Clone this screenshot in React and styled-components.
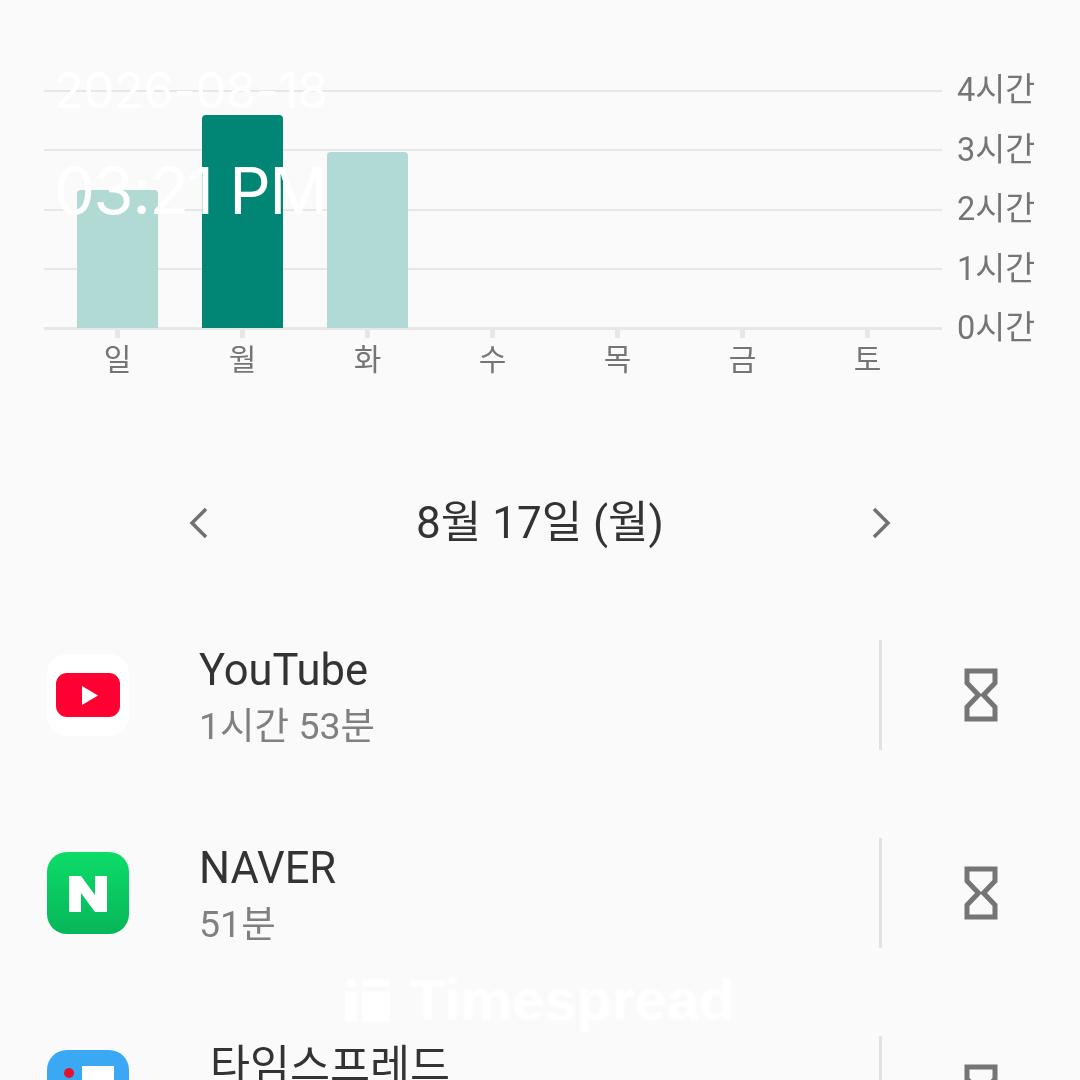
import React from "react";
import styled, { createGlobalStyle } from "styled-components";

const Global = createGlobalStyle`
  html, body { margin: 0; padding: 0; background: #fafafa; }
  body { font-family: Roboto, "Noto Sans CJK KR", "Noto Sans", sans-serif; }
`;

const Page = styled.div`
  position: relative;
  width: 1080px;
  height: 1080px;
  overflow: hidden;
  background: #fafafa;
`;

const ChartSection = styled.section`
  display: flex;
  align-items: flex-start;
  padding: 90px 0 0 44px;
  filter: blur(0.6px);
`;

const ChartMain = styled.div`
  width: 898px;
`;

const Plot = styled.div`
  position: relative;
  height: 240px;
  display: flex;
  flex-direction: column;
  justify-content: space-between;
`;

const GridLine = styled.div`
  height: ${(p) => (p.$base ? 3 : 2)}px;
  background: #e7e7e7;
`;

const BarRow = styled.div`
  position: absolute;
  inset: 0 13px 2px 11px;
  display: grid;
  grid-template-columns: repeat(7, 125px);
  align-items: end;
  justify-items: center;
`;

const Bar = styled.div`
  width: 81px;
  border-radius: 4px 4px 0 0;
  background: ${(p) => (p.$active ? "#018574" : "#b2dad5")};
`;

const DayRow = styled.div`
  display: grid;
  grid-template-columns: repeat(7, 125px);
  padding-left: 11px;
`;

const Day = styled.div`
  display: flex;
  flex-direction: column;
  align-items: center;
  font-size: 30px;
  line-height: 36px;
  color: #757575;
  &::before {
    content: "";
    width: 5px;
    height: 8px;
    margin-bottom: 4px;
    background: #e6e6e6;
  }
`;

const AxisLabels = styled.div`
  height: 240px;
  margin-left: 15px;
  display: flex;
  flex-direction: column;
  justify-content: space-between;
`;

const AxisLabel = styled.div`
  height: 2px;
  display: flex;
  align-items: center;
  font-size: 32.5px;
  line-height: 40px;
  color: #757575;
  white-space: nowrap;
  position: relative;
  top: -1px;
`;

const DateNav = styled.nav`
  display: flex;
  align-items: center;
  justify-content: space-between;
  margin-top: 113px;
  padding: 0 188px;
  height: 64px;
  filter: blur(0.6px);
`;

const DateTitle = styled.h2`
  margin: 0;
  font-size: 44px;
  font-weight: 400;
  line-height: 64px;
  color: #333;
  white-space: nowrap;
`;

const Chevron = styled.svg`
  width: 22px;
  height: 34px;
  fill: none;
  stroke: #707070;
  stroke-width: 3.5;
`;

const AppList = styled.ul`
  list-style: none;
  margin: 85px 0 0;
  padding: 0 82px 0 47px;
  display: flex;
  flex-direction: column;
  gap: 88px;
  filter: blur(0.6px);
`;

const AppRow = styled.li`
  height: 110px;
  display: flex;
  align-items: center;
`;

const AppIcon = styled.svg`
  flex: none;
  width: 82px;
  height: 82px;
  align-self: flex-start;
  margin-top: 14px;
`;

const AppText = styled.div`
  flex: 1;
  margin-left: ${(p) => (p.$indent ? 81 : 70)}px;
  align-self: flex-start;
  margin-top: 6px;
`;

const AppName = styled.div`
  font-size: 43.5px;
  line-height: 50px;
  color: #333;
  white-space: nowrap;
`;

const AppTime = styled.div`
  font-size: 37.5px;
  line-height: 50px;
  margin-top: 5px;
  color: #808080;
  white-space: nowrap;
`;

const Divider = styled.div`
  width: 3px;
  height: 110px;
  background: #e2e2e2;
`;

const TimerIcon = styled.svg`
  width: 34px;
  height: 54px;
  margin-left: 82px;
  fill: none;
  stroke: #757575;
  stroke-width: 5;
`;

const Stamp = styled.div`
  position: absolute;
  left: 54px;
  top: 58px;
  width: 280px;
  color: #fff;
  font-family: Inter, Roboto, sans-serif;
  font-weight: 400;
`;

const StampDate = styled.div`
  font-size: 49px;
  line-height: 66px;
  letter-spacing: -0.4px;
  white-space: nowrap;
`;

const StampTime = styled.div`
  margin-top: 29px;
  font-size: 65px;
  line-height: 76px;
  letter-spacing: -1.5px;
  white-space: nowrap;
`;

const Watermark = styled.div`
  position: absolute;
  left: 345px;
  top: 970px;
  display: flex;
  align-items: center;
  gap: 20px;
  color: #fff;
  font-family: "Liberation Sans", Arial, sans-serif;
  font-weight: 700;
  font-size: 58px;
  line-height: 60px;
  filter: blur(1px);
`;

const WatermarkMark = styled.svg`
  width: 45px;
  height: 44px;
  fill: #fff;
`;

const bars = [138, 213, 176];
const days = ["일", "월", "화", "수", "목", "금", "토"];
const hours = ["4시간", "3시간", "2시간", "1시간", "0시간"];

const Hourglass = () => (
  <TimerIcon viewBox="0 0 34 54">
    <path d="M3 3h28v12L19.500 27 31 39v12H3V39l11.500-12L3 15z" />
  </TimerIcon>
);

const YouTubeIcon = () => (
  <AppIcon viewBox="0 0 82 82">
    <rect width="82" height="82" rx="20" fill="#fff" />
    <rect x="9" y="19" width="64" height="44" rx="11" fill="#ff0033" />
    <path d="M35 32l16 9.500-16 9.500z" fill="#fff" />
  </AppIcon>
);

const NaverIcon = () => (
  <AppIcon viewBox="0 0 82 82">
    <defs>
      <linearGradient id="naverGrad" x1="0" y1="0" x2="0" y2="1">
        <stop offset="0" stopColor="#0cdc68" />
        <stop offset="1" stopColor="#07b65a" />
      </linearGradient>
    </defs>
    <rect width="82" height="82" rx="20" fill="url(#naverGrad)" />
    <path d="M22 24h12l14 19V24h12v36H48L34 41v19H22z" fill="#fff" />
  </AppIcon>
);

const TimespreadIcon = () => (
  <AppIcon viewBox="0 0 82 82">
    <rect width="82" height="82" rx="20" fill="#3ba8f3" />
    <circle cx="22" cy="23" r="5" fill="#e5112b" />
    <rect x="35" y="16" width="32" height="14" fill="#fff" />
    <rect x="35" y="38" width="32" height="14" fill="#fff" />
  </AppIcon>
);

const apps = [
  { name: "YouTube", time: "1시간 53분", Icon: YouTubeIcon },
  { name: "NAVER", time: "51분", Icon: NaverIcon },
  { name: "타임스프레드", Icon: TimespreadIcon, indent: true },
];

export default function App() {
  return (
    <Page>
      <Global />
      <ChartSection>
        <ChartMain>
          <Plot>
            {hours.map((h, i) => (
              <GridLine key={h} $base={i === hours.length - 1} />
            ))}
            <BarRow>
              {bars.map((h, i) => (
                <Bar key={i} $active={i === 1} style={{ height: h }} />
              ))}
            </BarRow>
          </Plot>
          <DayRow>
            {days.map((d) => (
              <Day key={d}>{d}</Day>
            ))}
          </DayRow>
        </ChartMain>
        <AxisLabels>
          {hours.map((h) => (
            <AxisLabel key={h}>{h}</AxisLabel>
          ))}
        </AxisLabels>
      </ChartSection>

      <DateNav>
        <Chevron viewBox="0 0 22 34">
          <path d="M18 3L4 17l14 14" />
        </Chevron>
        <DateTitle>8월 17일 (월)</DateTitle>
        <Chevron viewBox="0 0 22 34">
          <path d="M4 3l14 14L4 31" />
        </Chevron>
      </DateNav>

      <AppList>
        {apps.map(({ name, time, Icon, indent }) => (
          <AppRow key={name}>
            <Icon />
            <AppText $indent={indent}>
              <AppName>{name}</AppName>
              {time && <AppTime>{time}</AppTime>}
            </AppText>
            <Divider />
            <Hourglass />
          </AppRow>
        ))}
      </AppList>

      <Stamp>
        <StampDate>2026-08-18</StampDate>
        <StampTime>03:21 PM</StampTime>
      </Stamp>

      <Watermark>
        <WatermarkMark viewBox="0 0 45 44">
          <circle cx="6" cy="5" r="5" />
          <rect x="0" y="13" width="12" height="31" />
          <rect x="17" y="1" width="28" height="8" />
          <rect x="17" y="13" width="28" height="31" />
        </WatermarkMark>
        Timespread
      </Watermark>
    </Page>
  );
}
